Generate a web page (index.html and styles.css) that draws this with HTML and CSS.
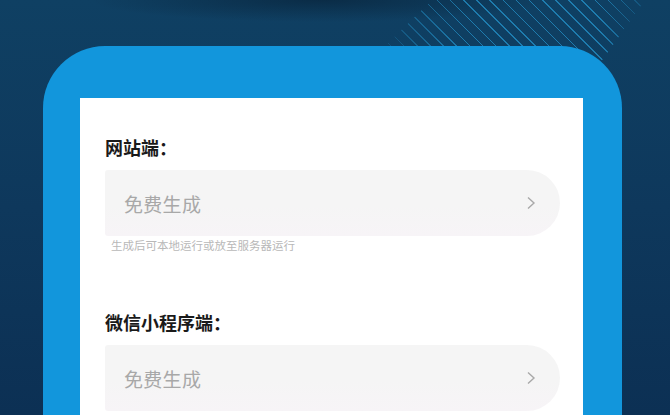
FILE: index.html
```html
<!DOCTYPE html>
<html lang="zh-CN">
<head>
    <meta charset="UTF-8">
    <meta name="viewport" content="width=device-width, initial-scale=1.0">
    <title>免费生成</title>
    <link rel="stylesheet" href="styles.css">
</head>
<body>
    <div class="stripes"></div>
    <div class="frame">
        <div class="panel">
            <!-- 网站端 -->
            <div class="field">
                <div class="label">网站端：</div>
                <div class="bar">
                    <span>免费生成</span>
                    <svg class="chevron" width="10" height="14" viewBox="0 0 10 14"><polyline points="2,1.5 8,7 2,12.5" fill="none" stroke="#a9a9a9" stroke-width="1.4"/></svg>
                </div>
                <div class="hint">生成后可本地运行或放至服务器运行</div>
            </div>

            <!-- 微信小程序端 -->
            <div class="field second">
                <div class="label">微信小程序端：</div>
                <div class="bar">
                    <span>免费生成</span>
                    <svg class="chevron" width="10" height="14" viewBox="0 0 10 14"><polyline points="2,1.5 8,7 2,12.5" fill="none" stroke="#a9a9a9" stroke-width="1.4"/></svg>
                </div>
            </div>
        </div>
    </div>
</body>
</html>
```

FILE: styles.css
```css
html, body {
    height: 100%;
}
body {
    margin: 0;
    padding: 0;
    overflow: hidden;
    position: relative;
    font-family: "Noto Sans CJK SC", "Noto Sans", sans-serif;
    background:
        radial-gradient(ellipse 230px 22px at 320px 0, rgba(6, 24, 42, 0.5), rgba(6, 24, 42, 0) 100%),
        linear-gradient(180deg, #0f4063 0%, #0e385c 50%, #0c3054 100%);
}
.stripes {
    position: absolute;
    left: 360px;
    top: 0;
    width: 300px;
    height: 80px;
    background: repeating-linear-gradient(45deg,
        rgba(40, 165, 225, 0) 0px,
        rgba(40, 165, 225, 0) 8.2px,
        rgba(40, 165, 225, 0.6) 8.2px,
        rgba(40, 165, 225, 0.6) 9.3px);
    -webkit-mask-image: linear-gradient(90deg, transparent 0%, #000 35%, #000 80%, transparent 100%);
    mask-image: linear-gradient(90deg, transparent 0%, #000 35%, #000 80%, transparent 100%);
    clip-path: polygon(25px 46px, 72px 0, 285px 0, 228px 80px, 215px 80px);
}
.frame {
    position: relative;
    z-index: 1;
    margin: 46px 0 0 43px;
    width: 579px;
    height: 400px;
    box-sizing: border-box;
    padding: 52px 39px 0 37px;
    background: #1296dc;
    border-radius: 62px 62px 0 0;
}
.panel {
    background: #fff;
    height: 100%;
    padding: 37px 25px 0 25px;
    box-sizing: border-box;
}
.field.second {
    margin-top: 57px;
}
.label {
    font-size: 18px;
    line-height: 24px;
    font-weight: 700;
    color: #1a1a1a;
}
.bar {
    margin-top: 11px;
    height: 66px;
    width: 455px;
    box-sizing: border-box;
    padding: 0 24px 0 19px;
    display: flex;
    align-items: center;
    justify-content: space-between;
    background: linear-gradient(180deg, #f5f5f5 0%, #f5f5f5 55%, #f7f4f7 100%);
    border-radius: 3px 33px 33px 3px;
}
.bar span {
    font-size: 19px;
    color: #a8a8a8;
    letter-spacing: 0.3px;
}
.hint {
    margin: 1px 0 0 6px;
    font-size: 11.5px;
    line-height: 16px;
    color: #b8b8b8;
}
```
